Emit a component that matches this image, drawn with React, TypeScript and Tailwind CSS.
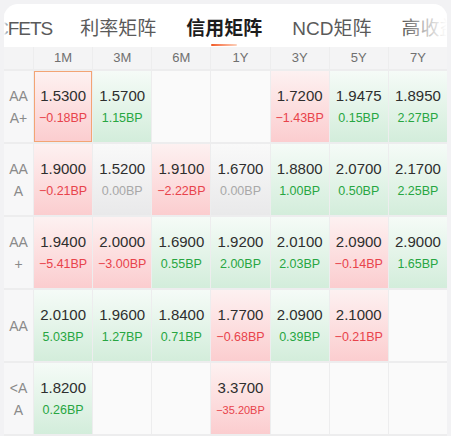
import React from "react";

type Tone = "up" | "down" | "flat";

interface Cell {
  rate: string;
  bp: string;
  tone: Tone;
  small?: boolean;
}

const tenors = ["1M", "3M", "6M", "1Y", "3Y", "5Y", "7Y"];

const c = (rate: string, bp: string, tone: Tone, small?: boolean): Cell => ({ rate, bp, tone, small });

const rows: { label: string[]; cells: (Cell | null)[] }[] = [
  {
    label: ["AA", "A+"],
    cells: [
      c("1.5300", "−0.18BP", "down"),
      c("1.5700", "1.15BP", "up"),
      null,
      null,
      c("1.7200", "−1.43BP", "down"),
      c("1.9475", "0.15BP", "up"),
      c("1.8950", "2.27BP", "up"),
    ],
  },
  {
    label: ["AA", "A"],
    cells: [
      c("1.9000", "−0.21BP", "down"),
      c("1.5200", "0.00BP", "flat"),
      c("1.9100", "−2.22BP", "down"),
      c("1.6700", "0.00BP", "flat"),
      c("1.8800", "1.00BP", "up"),
      c("2.0700", "0.50BP", "up"),
      c("2.1700", "2.25BP", "up"),
    ],
  },
  {
    label: ["AA", "+"],
    cells: [
      c("1.9400", "−5.41BP", "down"),
      c("2.0000", "−3.00BP", "down"),
      c("1.6900", "0.55BP", "up"),
      c("1.9200", "2.00BP", "up"),
      c("2.0100", "2.03BP", "up"),
      c("2.0900", "−0.14BP", "down"),
      c("2.9000", "1.65BP", "up"),
    ],
  },
  {
    label: ["AA"],
    cells: [
      c("2.0100", "5.03BP", "up"),
      c("1.9600", "1.27BP", "up"),
      c("1.8400", "0.71BP", "up"),
      c("1.7700", "−0.68BP", "down"),
      c("2.0900", "0.39BP", "up"),
      c("2.1000", "−0.21BP", "down"),
      null,
    ],
  },
  {
    label: ["<A", "A"],
    cells: [
      c("1.8200", "0.26BP", "up"),
      null,
      null,
      c("3.3700", "−35.20BP", "down", true),
      null,
      null,
      null,
    ],
  },
];

const bgByTone: Record<Tone, string> = {
  down: "bg-gradient-to-b from-[#fdf1f1] to-[#fbcdcf]",
  up: "bg-gradient-to-b from-[#f5fbf7] to-[#d3eddb]",
  flat: "bg-gradient-to-b from-[#f9f9f9] to-[#e9e9ea]",
};

const textByTone: Record<Tone, string> = {
  down: "text-[#e8434b]",
  up: "text-[#27a642]",
  flat: "text-[#a8a8a8]",
};

function RateCell({ cell, selected }: { cell: Cell | null; selected?: boolean }) {
  if (!cell) return <div className="h-[71px] bg-[#fafafa]" />;
  return (
    <div
      className={`h-[71px] flex flex-col items-center justify-center ${bgByTone[cell.tone]} ${
        selected ? "border border-[#f3a474]" : ""
      }`}
    >
      <span className="leading-[20px] text-[15px] text-[#2e2e2e]">{cell.rate}</span>
      <span
        className={`mt-[3px] leading-[18px] ${cell.small ? "text-[11px]" : "text-[12.5px]"} ${textByTone[cell.tone]}`}
      >
        {cell.bp}
      </span>
    </div>
  );
}

export default function App() {
  return (
    <div
      className="min-h-screen bg-[#f2f2f4] px-[4px] pt-[4px]"
      style={{ fontFamily: '"Liberation Sans", "Noto Sans CJK SC", sans-serif' }}
    >
      <div className="bg-white rounded-t-[14px] overflow-hidden">
        {/* tabs, scrolled so the first one is half out of view */}
        <div className="relative h-[43px] overflow-hidden">
          <div className="flex gap-[30px] ml-[-9px] pt-[12px] whitespace-nowrap text-[19px] leading-[26px] text-[#5a5a5a]">
            <span className="tracking-[-1px] mr-[-2px]">CFETS</span>
            <span>利率矩阵</span>
            <span className="flex flex-col items-center">
              <span className="font-bold text-[#1c1c1c]">信用矩阵</span>
              <span className="mt-[1.5px] h-[2px] w-[26px] rounded-full bg-gradient-to-r from-[#f0561c] to-[#fbd2bd]" />
            </span>
            <span>NCD矩阵</span>
            <span>高收益</span>
          </div>
          <div className="absolute left-0 top-0 h-full w-[5px] bg-gradient-to-r from-white to-transparent" />
          <div className="absolute right-0 top-0 h-full w-[44px] bg-gradient-to-l from-white via-white/60 to-transparent" />
        </div>

        {/* matrix */}
        <div className="grid grid-cols-[29px_repeat(7,minmax(0,1fr))] gap-x-[1px] gap-y-[2px] bg-[#ededee] pb-[2px]">
          <div className="h-[22px] bg-[#f4f4f5]" />
          {tenors.map((t) => (
            <div key={t} className="h-[22px] bg-[#f4f4f5] flex items-center justify-center text-[13px] text-[#707070]">
              {t}
            </div>
          ))}
          {rows.map((row, ri) => (
            <React.Fragment key={ri}>
              <div className="h-[71px] bg-[#f7f7f8] flex flex-col items-center justify-center text-[14px] text-[#8a8a8a]">
                {row.label.map((l, li) => (
                  <span key={li} className={`leading-[20px] ${li > 0 ? "mt-[2px]" : ""}`}>
                    {l}
                  </span>
                ))}
              </div>
              {row.cells.map((cell, ci) => (
                <RateCell key={ci} cell={cell} selected={ri === 0 && ci === 0} />
              ))}
            </React.Fragment>
          ))}
        </div>
      </div>
    </div>
  );
}
